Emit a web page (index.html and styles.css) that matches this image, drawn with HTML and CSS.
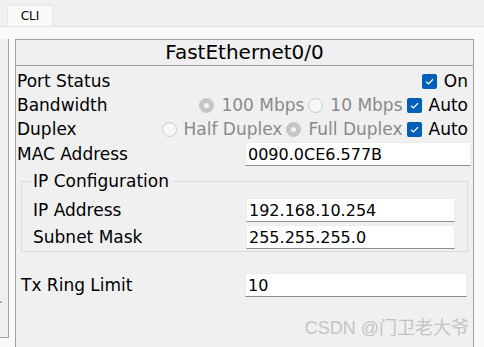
FILE: index.html
```html
<!DOCTYPE html>
<html lang="en">
<head>
  <meta charset="UTF-8" />
  <title>FastEthernet0/0</title>
  <link rel="stylesheet" href="styles.css">
</head>
<body>

  <!-- Tabs -->
  <div class="tabbar">
    <div class="tab">CLI</div>
  </div>

  <div class="workspace">
    <div class="side-list">
      <span class="scroll-mark"></span>
    </div>

    <div class="panel">
      <div class="panel-title">FastEthernet0/0</div>

      <div class="panel-body">
        <div class="row">
          <span class="label">Port Status</span>
          <div class="controls">
            <label class="opt"><span class="check"><svg viewBox="0 0 15 15"><path d="M4 7.6l2.4 2.3L11 5.2" /></svg></span>On</label>
          </div>
        </div>

        <div class="row">
          <span class="label">Bandwidth</span>
          <div class="controls">
            <label class="opt off"><span class="radio on"></span>100 Mbps</label>
            <label class="opt off"><span class="radio"></span>10 Mbps</label>
            <label class="opt"><span class="check"><svg viewBox="0 0 15 15"><path d="M4 7.6l2.4 2.3L11 5.2" /></svg></span>Auto</label>
          </div>
        </div>

        <div class="row">
          <span class="label">Duplex</span>
          <div class="controls">
            <label class="opt off"><span class="radio"></span>Half Duplex</label>
            <label class="opt off"><span class="radio on"></span>Full Duplex</label>
            <label class="opt"><span class="check"><svg viewBox="0 0 15 15"><path d="M4 7.6l2.4 2.3L11 5.2" /></svg></span>Auto</label>
          </div>
        </div>

        <div class="row field mac">
          <span class="label">MAC Address</span>
          <input class="text-in" value="0090.0CE6.577B" />
        </div>

        <fieldset class="group">
          <legend>IP Configuration</legend>
          <div class="row field">
            <span class="label">IP Address</span>
            <input class="text-in" value="192.168.10.254" />
          </div>
          <div class="row field">
            <span class="label">Subnet Mask</span>
            <input class="text-in" value="255.255.255.0" />
          </div>
        </fieldset>

        <div class="row field tx">
          <span class="label">Tx Ring Limit</span>
          <input class="text-in" value="10" />
        </div>
      </div>

      <div class="watermark">CSDN @门卫老大爷</div>
    </div>
  </div>

</body>
</html>
```

FILE: styles.css
```css
body {
  margin: 0;
  padding: 0;
  font-family: "DejaVu Sans", Verdana, sans-serif;
  background: #f9f9f9;
  height: 347px;
  overflow: hidden;
}

.tabbar {
  height: 26px;
  background: #efefef;
  border-bottom: 1px solid #e2e2e2;
  padding-left: 7px;
  display: flex;
  align-items: flex-end;
}

.tab {
  width: 44px;
  height: 20px;
  background: #fafafa;
  border: 1px solid #e6e6e6;
  border-bottom: none;
  font-size: 12px;
  line-height: 20px;
  text-align: center;
  color: #000;
}

.workspace {
  display: flex;
  padding-top: 12px;
  height: 308px;
}

.side-list {
  width: 8px;
  height: 298px;
  background: #f0f0f0;
  border-right: 1px solid #a0a0a0;
  border-bottom: 1px solid #a0a0a0;
  position: relative;
}

.scroll-mark {
  position: absolute;
  left: 0;
  top: 262px;
  width: 2px;
  height: 2px;
  background: #b0b0b0;
}

.panel {
  margin-left: 6px;
  width: 457px;
  height: 308px;
  background: #f0f0f0;
  border-left: 1px solid #a0a0a0;
  border-right: 1px solid #a0a0a0;
  position: relative;
}

.panel-title {
  height: 25px;
  border-top: 1px solid #a0a0a0;
  border-bottom: 1px solid #a0a0a0;
  text-align: center;
  font-size: 20px;
  line-height: 25px;
  color: #000;
}

.panel-body {
  padding: 3px 5px 0 1px;
  font-size: 17px;
}

.row {
  display: flex;
  align-items: center;
  justify-content: space-between;
  height: 24px;
}

.controls {
  display: flex;
  align-items: center;
}

.opt {
  display: flex;
  align-items: center;
  gap: 7px;
  margin-left: 4px;
  color: #000;
}

.opt.off {
  color: #8a8a8a;
}

.check {
  width: 15px;
  height: 15px;
  border-radius: 2px;
  background: #005fb8;
  display: inline-block;
}

.check svg {
  width: 15px;
  height: 15px;
  display: block;
  fill: none;
  stroke: #fff;
  stroke-width: 1.3;
}

.radio {
  width: 13px;
  height: 13px;
  border-radius: 50%;
  border: 1px solid #c8c8c8;
  background: #f7f7f7;
  box-sizing: content-box;
  position: relative;
}

.radio.on {
  background: #c6c6c6;
  border-color: #c6c6c6;
}

.radio.on::after {
  content: "";
  position: absolute;
  left: 4px;
  top: 4px;
  width: 5px;
  height: 5px;
  border-radius: 50%;
  background: #f4f4f4;
}

.field {
  justify-content: flex-start;
}

.field .label {
  width: 228px;
}

.text-in {
  flex: 1;
  height: 24px;
  box-sizing: border-box;
  margin: 0;
  padding: 0 0 0 2px;
  border: 1px solid #ececec;
  border-bottom-color: #8c8c8c;
  background: #fff;
  font-family: "DejaVu Sans", Verdana, sans-serif;
  font-size: 16px;
  color: #000;
  outline: none;
}

.mac {
  margin-top: 1px;
  margin-right: -3px;
}

.group {
  margin: 7px 0 0 4px;
  padding: 9px 12px 2px 11px;
  border: 1px solid #dadada;
}

.group legend {
  padding: 0 4px 0 3px;
  margin-left: -3px;
  font-size: 17px;
  line-height: 16px;
}

.group .row + .row {
  margin-top: 3px;
}

.group .field .label {
  width: 213px;
}

.tx {
  margin-top: 21px;
  padding-left: 4px;
  margin-right: 1px;
}

.tx .label {
  width: 224px;
}

.watermark {
  position: absolute;
  right: 4px;
  bottom: 9px;
  font-family: "Liberation Sans", "Noto Sans CJK SC", sans-serif;
  font-size: 18px;
  line-height: 20px;
  color: #c4c4c4;
}
```
